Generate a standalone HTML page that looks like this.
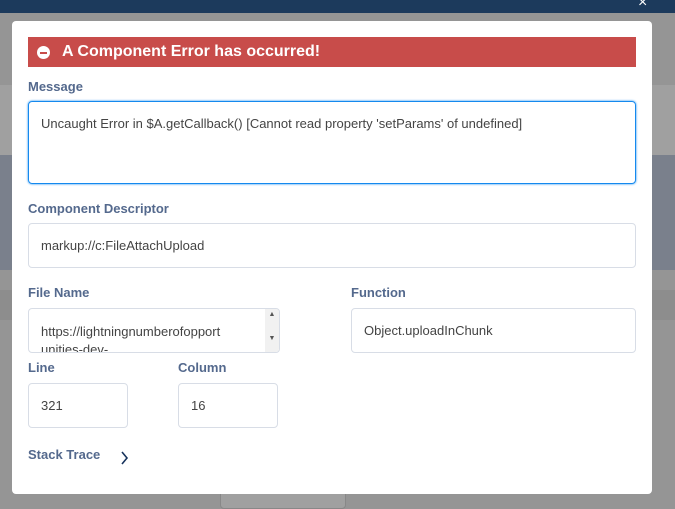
<!DOCTYPE html>
<html><head><style>
*{margin:0;padding:0;box-sizing:border-box}
body{width:675px;height:509px;position:relative;overflow:hidden;background:#959595;font-family:"Liberation Sans",sans-serif}
.bg{position:absolute;left:0;width:675px}
.modal{position:absolute;left:12px;top:21px;width:640px;height:473px;background:#fff;border-radius:4px}
.ban{position:absolute;left:16px;top:16px;width:608px;height:30px;background:#c84c4a;color:#fff;font-weight:bold;font-size:16px;line-height:30px;padding-left:34px}
.ban i{position:absolute;left:9px;top:9px;width:13px;height:13px;border-radius:50%;background:#fff}
.ban i:after{content:"";position:absolute;left:3px;top:5.5px;width:7px;height:2px;background:#c84c4a}
.lb{position:absolute;color:#54698d;font-weight:bold;font-size:13px}
.f{position:absolute;border:1px solid #d8dde6;border-radius:4px;font-size:13px;color:#444;padding-left:12px}
</style></head><body>
<div class="bg" style="top:0;height:13px;background:#1c3a5c"></div>
<div class="bg" style="top:85px;height:70px;background:#a0a0a0"></div>
<div class="bg" style="top:155px;height:115px;background:#7a808c"></div>
<div class="bg" style="top:290px;height:30px;background:#8d8d8d"></div>
<div style="position:absolute;left:638px;top:-6px;color:#fff;font-size:16px">×</div>
<div style="position:absolute;left:220px;top:484px;width:126px;height:25px;border:1px solid #888;border-radius:4px;background:#a0a0a0"></div>
<div class="modal">
<div class="ban"><i></i>A Component Error has occurred!</div>
<div class="lb" style="left:16px;top:58px">Message</div>
<div class="f" style="left:16px;top:80px;width:608px;height:83px;border:1px solid #1589ee;padding-top:14px;box-shadow:0 0 2px #1589ee">Uncaught Error in $A.getCallback() [Cannot read property 'setParams' of undefined]</div>
<div class="lb" style="left:16px;top:180px">Component Descriptor</div>
<div class="f" style="left:16px;top:202px;width:608px;height:45px;line-height:43px">markup://c:FileAttachUpload</div>
<div class="lb" style="left:16px;top:264px">File Name</div>
<div class="f" style="left:16px;top:287px;width:252px;height:45px;padding-top:14px;line-height:18px;overflow:hidden">https://lightningnumberofopport<br>unities-dev-<span style="position:absolute;right:0;top:0;width:14px;height:43px;background:#f1f1f1;font-size:7px;color:#555;text-align:center;line-height:12px">▲<br><br>▼</span></div>
<div class="lb" style="left:339px;top:264px">Function</div>
<div class="f" style="left:339px;top:287px;width:285px;height:45px;line-height:43px">Object.uploadInChunk</div>
<div class="lb" style="left:16px;top:339px">Line</div>
<div class="f" style="left:16px;top:362px;width:100px;height:45px;line-height:43px">321</div>
<div class="lb" style="left:166px;top:339px">Column</div>
<div class="f" style="left:166px;top:362px;width:100px;height:45px;line-height:43px">16</div>
<div class="lb" style="left:16px;top:426px">Stack Trace</div>
<svg style="position:absolute;left:108px;top:430px" width="10" height="14"><path d="M2 1l5 6-5 6" stroke="#16325c" stroke-width="1.6" fill="none"/></svg>
</div>
</body></html>
